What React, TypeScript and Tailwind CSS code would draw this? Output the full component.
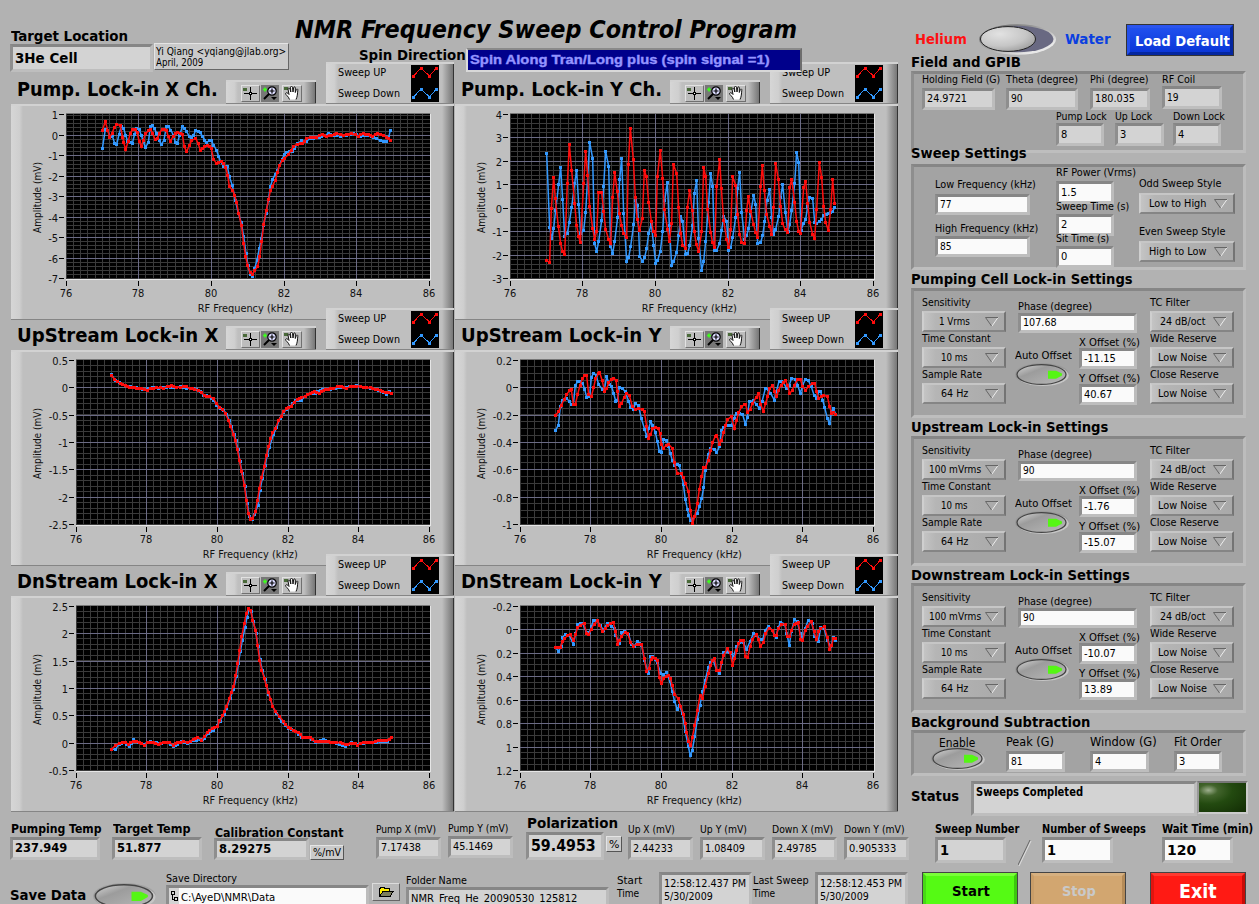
import React, { useLayoutEffect, useRef } from "react";
import clsx from "clsx";

const UI = "font-['DejaVu_Sans_Condensed','Noto_Sans',sans-serif]";

// Text set to a fixed advance width, glyphs are stretched to fill it.
function Txt({ w, className, children }: { w?: number; className?: string; children: string }) {
  const outer = useRef<HTMLSpanElement>(null);
  const inner = useRef<HTMLSpanElement>(null);

  useLayoutEffect(() => {
    if (!outer.current || !inner.current || !w) return;
    const natural = inner.current.offsetWidth;
    outer.current.style.width = `${w}px`;
    inner.current.style.transform = `scaleX(${w / natural})`;
  }, [w, children]);

  return (
    <span ref={outer} className={clsx("block shrink-0 whitespace-nowrap", className)}>
      <span ref={inner} className="inline-block origin-left align-top">
        {children}
      </span>
    </span>
  );
}

const INSET =
  "border-3 border-t-[#868686] border-l-[#8e8e8e] border-r-[#bcbcbc] border-b-[#bebebe]";

function Box({
  value,
  vw,
  white,
  className,
  text = "text-[11px] pt-[1px]",
}: {
  value: string;
  vw?: number;
  white?: boolean;
  className: string;
  text?: string;
}) {
  return (
    <div
      className={clsx(
        "flex shrink-0 items-center pl-[2px]",
        INSET,
        white ? "bg-[#fafafa]" : "bg-[#d3d3d3]",
        className
      )}
    >
      <Txt w={vw} className={text}>
        {value}
      </Txt>
    </div>
  );
}

interface FieldProps {
  label: string;
  lw: number;
  value: string;
  vw?: number;
  white?: boolean;
  className?: string;
  labelClass?: string;
  box: string;
  text?: string;
}

function Field({ label, lw, value, vw, white, className, labelClass, box, text }: FieldProps) {
  return (
    <div className={clsx("flex shrink-0 flex-col", className)}>
      <Txt w={lw} className={clsx("relative", labelClass ?? "h-[14px] text-[11px] leading-[14px]")}>
        {label}
      </Txt>
      <Box value={value} vw={vw} white={white} className={box} text={text} />
    </div>
  );
}

function Dropdown({ value, vw, wide }: { value: string; vw: number; wide?: boolean }) {
  return (
    <div
      className={clsx(
        "flex h-[21px] items-center border-2 border-t-[#c6c6c6] border-r-[#747474] border-b-[#858585] border-l-[#cfcfcf] bg-linear-to-r from-[#c4c4c4] via-[#b5b5b5] via-15% to-[#a9a9a9]",
        wide ? "mt-[1px] w-[96px]" : "w-[84px]"
      )}
    >
      <div className="flex flex-1 justify-center">
        <Txt w={vw} className="text-[11px] leading-[16px]">
          {value}
        </Txt>
      </div>
      <svg width="14" height="10" viewBox="0 0 14 10" className="mt-[1px] mr-[5px] shrink-0">
        <path d="M13 0.5 L7 9" stroke="#ececec" fill="none" />
        <path d="M13 0.5 H0.5 L6.5 9" stroke="#666" fill="none" />
      </svg>
    </div>
  );
}

function Setting({ label, lw, value, vw, wide }: { label: string; lw: number; value: string; vw: number; wide?: boolean }) {
  return (
    <div className="h-[36px]">
      <Txt w={lw} className="h-[15px] text-[11px] leading-[13px]">
        {label}
      </Txt>
      <Dropdown value={value} vw={vw} wide={wide} />
    </div>
  );
}

function GreenSwitch({ id, width, height }: { id: string; width: number; height: number }) {
  return (
    <svg width={width} height={height} viewBox="0 0 54 24" preserveAspectRatio="none" className="shrink-0">
      <defs>
        <linearGradient id={id} x1="0" y1="0" x2="1" y2="1">
          <stop offset="0" stopColor="#d8d8d8" />
          <stop offset="0.35" stopColor="#9c9c9c" />
          <stop offset="1" stopColor="#b9b9b9" />
        </linearGradient>
      </defs>
      <ellipse cx="27" cy="12" rx="27" ry="12" fill="#8f8f8f" opacity="0.5" />
      <ellipse cx="27.8" cy="13" rx="26" ry="11" fill="#c6c6c6" />
      <ellipse cx="26.5" cy="12" rx="24.5" ry="10.4" fill={`url(#${id})`} stroke="#444" strokeWidth="1.3" />
      <path d="M33 8 L41 8 L47 11 L47 13 L41 16.5 L33 16.5 Z" fill="#55f614" />
    </svg>
  );
}

function Bevel({ className, children }: { className: string; children: React.ReactNode }) {
  return (
    <div
      className={clsx(
        "relative flex border-t-2 border-b border-t-[#d2d2d2] border-b-[#858585] bg-[#bfbfbf]",
        className
      )}
    >
      <div className="w-3 shrink-0 bg-linear-to-r from-[#d6d6d6] via-[#cfcfcf] via-70% to-[#bfbfbf]" />
      <div className="flex min-w-0 flex-1">{children}</div>
      <div className="w-3 shrink-0 border-r border-[#333] bg-linear-to-r from-[#bfbfbf] to-[#777]" />
    </div>
  );
}

function Crosshair() {
  return (
    <svg width="19" height="16" viewBox="0 0 19 16" shapeRendering="crispEdges" className="shrink-0">
      <rect x="2" y="3" width="4" height="3" fill="#4a6a3a" />
      <path d="M3 8.5H8M11 8.5H16M9.5 2V7M9.5 10V15" stroke="#000" />
      <rect x="8.5" y="7.5" width="2" height="2" fill="#fff" stroke="#000" />
    </svg>
  );
}

function Magnifier() {
  return (
    <svg width="18" height="16" viewBox="0 0 18 16">
      <path d="M2 4.5H6M4 2.5V6.5" stroke="#3dff1c" strokeWidth="1.6" />
      <circle cx="11" cy="6" r="4.2" fill="#dcdcff" stroke="#000" strokeWidth="1.2" />
      <path d="M8.5 6H13.5M11 3.5V8.5" stroke="#000" strokeWidth="1.2" />
      <path d="M8 9L3 14" stroke="#000" strokeWidth="2" />
      <path d="M10 12H16L13 15Z" fill="#000" />
    </svg>
  );
}

function Hand() {
  return (
    <svg width="19" height="16" viewBox="0 0 19 16" className="shrink-0">
      <rect x="1" y="2" width="4" height="3" fill="#4a6a3a" />
      <path
        d="M6.5 14.5 C5.5 11 2.5 10 2.5 8.5 C3.2 7 5 8 6 9.5 L5 4 C5 2.8 6.5 2.8 7 4 L7.8 7 L7.5 2.2 C7.7 1 9.3 1 9.5 2.2 L10 7 L10.7 2.5 C11 1.4 12.4 1.7 12.3 3 L12.3 7.5 L13.3 4.5 C13.8 3.5 15 4 14.8 5.2 C14.4 9 14.5 11.5 13 14.5"
        fill="#fff"
        stroke="#111"
        strokeWidth="1"
      />
    </svg>
  );
}

const TOOL = "h-[17px] border border-t-[#e2e2e2] border-l-[#e2e2e2] border-r-[#707070] border-b-[#707070] bg-[#bdbdbd] flex items-center justify-center overflow-hidden";

function Palette() {
  return (
    <Bevel className="mt-[18px] h-[24px] w-[90px]">
      <div className="flex w-full items-center pt-[1px]">
        <div className={clsx(TOOL, "ml-[3px] w-[19px]")}><Crosshair /></div>
        <div className="ml-[1px] flex h-[17px] w-[18px] items-center justify-center overflow-hidden bg-[#777]"><Magnifier /></div>
        <div className={clsx(TOOL, "ml-[3px] w-[20px]")}><Hand /></div>
      </div>
    </Bevel>
  );
}

function LegendLine({ y, color }: { y: number; color: string }) {
  const pts = [[2.5, y + 8], [10, y], [18.5, y + 8], [25.5, y]];
  return (
    <g fill={color} shapeRendering="crispEdges">
      <polyline points={pts.map((p) => p.join(",")).join(" ")} fill="none" stroke={color} />
      {pts.map(([x, py]) => (
        <rect key={x} x={x - 1.5} y={py - 1.5} width="3" height="3" />
      ))}
    </g>
  );
}

function Legend() {
  return (
    <Bevel className="h-[42px] w-[128px]">
      <div className="flex flex-col pt-[1px]">
        <Txt w={48} className="h-[21px] text-[11px] leading-[15px]">Sweep UP</Txt>
        <Txt w={62} className="text-[11px] leading-[15px]">Sweep Down</Txt>
      </div>
      <svg width="28" height="37" viewBox="0 0 28 37" className="mt-[1px] mr-[3px] ml-auto shrink-0 bg-black">
        <LegendLine y={3} color="#ff0d0d" />
        <LegendLine y={24} color="#3399ff" />
      </svg>
    </Bevel>
  );
}

interface ChartProps {
  title: string;
  left: number;
  yTicks: string[];
  yAt: number[];
  minor: number;
  origin: [number, number];
  up: string;
  down: string;
}

// Traces are stored at three units per pixel.
function Trace({ data, color, origin }: { data: string; color: string; origin: [number, number] }) {
  const raw = data.trim().split(/\s+/).map((p) => {
    const [x, y] = p.split(",").map(Number);
    return [(x - origin[0]) / 3, (y - origin[1]) / 3];
  });
  const marks: number[][] = [];
  raw.forEach(([x, y], i) => {
    marks.push([x, y]);
    const next = raw[i + 1];
    if (!next) return;
    const n = Math.round((next[0] - x) / 2.7);
    for (let k = 1; k < n; k++) {
      marks.push([x + ((next[0] - x) * k) / n, y + ((next[1] - y) * k) / n]);
    }
  });
  return (
    <g fill={color}>
      <polyline points={raw.map((p) => p.join(",")).join(" ")} fill="none" stroke={color} strokeWidth="1.5" />
      {marks.map(([x, y], i) => (
        <rect key={i} x={Math.round(x - 1.5)} y={Math.round(y - 1.5)} width="3" height="3" shapeRendering="crispEdges" />
      ))}
    </g>
  );
}

function Plot({ left, yTicks, yAt, minor, origin, up, down }: ChartProps) {
  const right = 419.5;
  const top = 10;
  const bottom = 175;
  const stepX = (right - left) / 5;
  const majorX = [0, 1, 2, 3, 4, 5].map((i) => Math.floor(left + i * stepX) + 0.5);
  const minorX = Array.from({ length: 50 }, (_, i) => Math.floor(left + (i * stepX) / 10) + 0.5);
  const unit = (yAt[yAt.length - 1] - yAt[1]) / (yAt.length - 2) / minor;
  const minorY: number[] = [];
  for (let y = yAt[1]; y > top; y -= unit) minorY.push(Math.round(y) + 0.5);
  for (let y = yAt[1]; y < bottom; y += unit) minorY.push(Math.round(y) + 0.5);

  return (
    <svg width="443" height="213" viewBox="1 2 443 213" className="absolute top-0 left-0">
      <g shapeRendering="crispEdges">
        <rect x={left} y={top} width={420 - left} height={bottom - top} fill="#000" />
        <path d={minorX.map((x) => `M${x} ${top}V${bottom}`).join("") + minorY.map((y) => `M${left} ${y}H420`).join("")} stroke="#3a3a3a" />
        <path
          d={majorX.slice(1, 5).map((x) => `M${x} ${top}V${bottom}`).join("") + yAt.slice(1, -1).map((y) => `M${left} ${y + 0.5}H420`).join("")}
          stroke="#6b6b85"
        />
        <path d={`M${left} 9.5H420`} stroke="#777" />
        <path d={`M${left} ${bottom + 0.5}H420.5V10`} stroke="#e6e6e6" fill="none" />
        <path d={majorX.map((x) => `M${x} 177V182`).join("") + yAt.map((y) => `M${left - 7} ${y + 0.5}H${left - 2}`).join("")} stroke="#000" />
      </g>
      <Trace data={down} color="#3399ff" origin={origin} />
      <Trace data={up} color="#ff0d0d" origin={origin} />
      <g fontSize="11" fill="#111">
        {yTicks.map((t, i) => (
          <text key={t} x={left - 8} y={yAt[i] + 5} textAnchor="end">{t}</text>
        ))}
        {majorX.map((x, i) => (
          <text key={x} x={x - 0.5} y="193" textAnchor="middle">{76 + i * 2}</text>
        ))}
        <text x={(left + right) / 2 - 50} y="208" textLength="95" lengthAdjust="spacingAndGlyphs">RF Frequency (kHz)</text>
        <text transform="translate(31 129) rotate(-90)" textLength="71" lengthAdjust="spacingAndGlyphs">Amplitude (mV)</text>
      </g>
    </svg>
  );
}

function Chart(props: ChartProps) {
  return (
    <div className="h-[246px] w-[444px]">
      <div className="flex h-[42px]">
        <div className="w-[216px] pt-[15px] pl-[7px]">
          <Txt w={201} className="text-[19.5px] leading-[26px] font-bold">{props.title}</Txt>
        </div>
        <Palette />
        <div className="ml-auto"><Legend /></div>
      </div>
      <Bevel className="ml-[1px] h-[216px] w-[443px]">
        <Plot {...props} />
      </Bevel>
    </div>
  );
}

const CHARTS: ChartProps[] = [
  {
    title: "Pump. Lock-in X Ch.",
    left: 56,
    yTicks: ["1", "0", "-1", "-2", "-3", "-4", "-5", "-6", "-7"],
    yAt: [10, 31, 51, 72, 92, 113, 133, 154, 174],
    minor: 5,
    origin: [30, 312],
    down: "307,446 316,388 323,390 330,410 336,405 344,430 350,434 357,403 364,378 371,385 377,406 383,424 390,427 397,430 404,402 410,385 417,387 424,406 430,425 436,442 445,428 451,380 457,377 463,385 470,400 478,422 484,434 492,420 499,380 505,380 512,390 520,405 526,427 532,430 539,405 547,380 553,384 560,395 568,410 575,412 581,405 587,391 594,393 600,398 607,408 614,420 620,428 627,422 634,422 641,435 649,450 656,469 662,485 670,498 682,498 688,530 697,556 706,600 715,640 724,668 731,710 738,760 744,797 750,822 757,829 764,806 771,780 778,745 784,714 791,675 798,640 805,600 811,560 818,538 825,524 832,512 838,495 846,478 853,464 860,457 868,455 876,453 884,444 893,430 905,422 920,424 930,415 950,413 965,410 985,401 1000,406 1020,408 1040,405 1060,400 1080,408 1100,405 1115,410 1128,414 1140,422 1150,425 1160,425 1166,412 1171,391",
    up: "307,391 316,365 323,390 329,412 336,400 343,382 350,373 361,377 368,412 371,427 377,449 384,425 391,400 398,388 405,388 411,398 418,425 424,440 430,420 437,400 446,392 452,388 458,400 465,418 472,414 478,400 486,388 499,390 505,410 511,424 519,410 526,400 533,397 547,402 553,440 560,455 568,436 575,422 587,414 594,430 601,450 608,445 621,436 628,440 634,446 641,478 649,490 656,486 663,484 670,490 677,503 683,525 688,559 697,570 704,585 710,607 716,640 724,675 731,730 737,770 743,797 750,817 757,824 764,812 773,799 779,769 785,725 791,672 799,630 806,598 811,572 817,560 826,540 832,517 838,497 847,482 854,474 865,464 874,450 881,438 893,432 907,430 920,416 930,412 950,412 967,402 980,409 995,406 1010,400 1030,406 1055,400 1075,408 1090,401 1105,404 1118,408 1133,400 1150,407 1160,411 1166,415 1171,421",
  },
  {
    title: "Pump. Lock-in Y Ch.",
    left: 56,
    yTicks: ["4", "3", "2", "1", "0", "-1", "-2", "-3"],
    yAt: [10, 33, 57, 80, 104, 127, 151, 174],
    minor: 5,
    origin: [12, 312],
    down: "290,460 299,683 305,716 311,685 317,630 326,553 332,502 338,598 344,709 352,700 358,667 365,622 374,549 380,511 386,613 392,700 401,691 407,637 419,427 428,475 434,731 440,754 446,724 455,661 461,559 467,454 476,499 482,740 488,760 494,724 503,652 509,538 515,475 521,640 530,784 536,772 542,739 551,673 556,600 563,616 569,769 578,784 584,772 590,745 596,700 604,672 611,736 617,790 623,781 631,754 638,694 644,601 652,547 658,676 665,796 671,784 680,757 686,706 692,649 698,664 707,763 713,761 719,736 728,676 733,580 740,541 746,715 755,811 761,784 767,724 776,607 782,520 788,559 794,751 800,751 809,730 815,691 821,650 830,664 836,751 842,742 848,712 857,652 863,565 869,517 875,637 884,718 890,706 896,685 902,640 911,586 917,613 923,730 932,727 938,706 944,664 951,601 959,568 965,652 971,703 977,688 986,649 992,592 998,553 1006,637 1014,694 1019,674 1025,631 1034,550 1040,457 1046,487 1053,690 1061,670 1067,658 1073,620 1079,592 1088,596 1094,667 1100,670 1109,664 1115,658 1121,646 1128,643 1136,640 1142,638 1148,634 1154,622",
    up: "290,782 299,787 304,625 311,532 316,596 325,680 332,731 338,754 344,763 352,550 358,433 365,511 374,611 380,677 386,710 391,728 401,550 407,454 413,527 419,620 428,685 434,718 440,694 446,577 455,577 461,634 467,688 476,719 482,731 488,592 494,517 502,575 508,640 515,676 521,700 530,712 535,493 541,385 550,479 556,592 562,659 568,691 577,656 583,511 589,529 596,607 604,664 610,694 617,706 622,530 631,451 638,535 643,629 653,688 658,724 665,671 670,493 680,520 686,622 692,700 698,737 707,745 712,622 719,571 727,632 733,694 739,733 746,754 755,695 761,502 767,530 773,628 782,697 788,728 794,743 800,560 809,478 814,565 821,661 830,718 836,743 842,688 848,530 857,556 863,643 869,703 875,728 884,731 890,632 895,589 902,634 911,674 917,697 923,712 932,559 937,496 943,571 950,643 959,679 965,703 971,622 977,490 985,538 992,619 998,671 1005,688 1013,697 1019,562 1025,538 1034,607 1040,664 1046,694 1051,700 1061,562 1067,544 1073,610 1079,667 1088,703 1094,715 1100,628 1108,487 1115,532 1121,619 1127,667 1135,691 1142,628 1148,538 1154,610",
  },
  {
    title: "UpStream Lock-in X",
    left: 66,
    yTicks: ["0.5", "0", "-0.5", "-1", "-1.5", "-2", "-2.5"],
    yAt: [10, 37, 65, 92, 119, 147, 174],
    minor: 5,
    origin: [30, 120],
    down: "334,193 345,210 358,218 375,227 390,230 410,233 436,239 456,231 475,234 500,232 520,232 540,230 560,235 580,235 600,243 610,255 628,258 641,270 650,286 660,294 670,300 680,312 687,330 694,350 702,372 708,392 714,418 720,455 727,490 735,530 742,580 748,618 757,628 764,612 774,585 780,540 787,505 795,465 802,435 808,412 820,374 830,352 840,325 850,308 860,298 872,288 885,272 905,270 915,258 930,250 945,250 960,240 990,238 1005,234 1020,231 1040,232 1068,226 1090,232 1110,234 1125,239 1145,245 1158,252 1168,244 1175,249",
    up: "334,196 343,207 352,215 362,220 375,225 388,233 410,234 425,235 441,241 452,235 470,233 490,234 502,230 515,227 528,232 540,231 558,230 570,236 583,237 595,240 604,247 613,257 628,260 640,265 650,280 658,291 667,297 676,310 685,330 692,350 700,372 706,392 712,418 718,450 725,485 733,525 739,571 745,610 752,629 758,624 766,605 772,572 778,536 785,502 793,468 799,437 806,409 812,385 818,368 827,354 836,330 844,318 850,305 860,296 873,288 882,277 892,268 905,261 917,259 930,250 943,244 957,250 970,240 985,237 1000,236 1012,230 1025,229 1038,235 1050,230 1070,228 1090,232 1110,233 1125,238 1140,241 1155,247 1175,250",
  },
  {
    title: "UpStream Lock-in Y",
    left: 66,
    yTicks: ["0.2", "0", "-0.2", "-0.4", "-0.6", "-0.8", "-1"],
    yAt: [10, 37, 65, 92, 119, 147, 174],
    minor: 4,
    origin: [12, 120],
    down: "316,361 325,346 331,290 338,270 349,265 358,274 364,283 370,283 376,226 383,215 392,213 398,220 404,238 410,262 419,258 424,202 430,190 438,195 446,223 456,237 463,240 470,200 478,224 484,228 491,250 497,273 502,270 508,232 518,236 526,245 536,274 542,292 550,298 556,281 565,287 574,325 584,358 590,380 596,355 602,335 608,345 616,367 622,394 628,424 634,427 641,388 649,392 656,408 661,430 667,451 674,465 682,463 688,467 694,492 700,522 706,569 712,597 716,616 722,631 727,628 734,618 742,609 748,590 755,565 761,532 766,480 775,434 781,415 793,418 800,427 809,409 814,362 821,352 830,346 844,346 852,325 858,310 868,310 878,314 886,342 892,322 898,275 910,272 918,282 928,295 936,275 946,236 954,238 962,250 973,270 979,245 987,214 1000,217 1010,236 1018,225 1025,204 1036,208 1043,225 1051,250 1058,225 1066,209 1075,212 1084,230 1092,255 1100,265 1106,245 1112,245 1118,270 1124,292 1132,325 1139,341 1144,305 1150,296 1157,312",
    up: "316,316 326,305 333,287 343,267 350,254 358,242 364,238 370,283 376,283 383,253 390,225 398,205 404,196 410,197 416,254 424,259 431,233 437,205 446,190 449,187 456,210 464,244 470,236 476,218 483,208 491,205 498,210 502,245 508,289 515,280 522,262 530,250 538,256 547,289 556,298 565,296 577,298 583,305 590,350 596,385 602,372 608,356 617,352 625,355 630,370 634,402 641,415 648,405 655,402 667,415 673,458 682,490 694,491 700,503 706,520 715,543 721,600 728,640 734,620 742,580 748,538 755,499 761,472 767,472 775,450 782,422 788,397 796,378 800,376 809,402 815,390 821,368 827,345 833,328 844,320 853,355 860,330 866,308 875,290 882,284 887,284 893,308 900,298 908,280 918,262 926,250 932,282 940,304 947,280 953,258 958,236 968,226 974,245 980,260 986,240 993,225 1006,212 1013,225 1019,250 1026,242 1033,225 1043,209 1051,208 1058,230 1067,241 1075,230 1087,220 1094,220 1100,245 1106,265 1114,260 1121,256 1132,260 1139,290 1145,311 1150,306 1157,313",
  },
  {
    title: "DnStream Lock-in X",
    left: 66,
    yTicks: ["2.5", "2", "1.5", "1", "0.5", "0", "-0.5"],
    yAt: [10, 37, 65, 92, 119, 147, 174],
    minor: 5,
    origin: [30, 138],
    down: "334,598 346,598 358,582 372,577 387,590 401,569 415,577 432,582 450,574 470,578 485,580 500,577 520,589 533,583 545,574 562,580 580,572 600,569 613,565 625,550 640,540 652,527 660,513 672,492 680,475 690,445 701,418 709,378 715,340 721,305 727,270 735,233 741,202 747,180 753,184 760,215 768,250 774,290 780,328 787,362 795,388 806,432 818,470 830,490 845,515 865,535 885,543 905,562 925,563 945,576 970,568 985,575 1010,580 1036,588 1055,578 1072,584 1100,577 1120,578 1140,575 1162,575 1175,563",
    up: "334,598 346,587 358,580 375,577 385,582 400,575 418,576 433,586 442,578 460,577 475,582 490,577 508,577 520,585 533,578 550,574 562,578 580,568 593,562 605,570 613,560 622,547 636,536 652,530 659,511 668,497 674,484 680,468 688,446 694,426 701,408 707,377 713,340 719,302 725,260 733,220 739,189 746,176 752,182 758,210 767,242 773,287 779,331 785,360 793,385 799,407 806,428 812,449 818,469 827,485 838,499 850,514 865,533 880,540 895,547 908,561 930,562 945,573 970,573 1000,577 1020,578 1035,584 1050,580 1065,580 1072,585 1090,577 1118,578 1135,571 1160,572 1175,562",
  },
  {
    title: "DnStream Lock-in Y",
    left: 66,
    yTicks: ["-0.2", "0", "0.2", "0.4", "0.6", "0.8", "1", "1.2"],
    yAt: [10, 33, 57, 80, 104, 127, 151, 174],
    minor: 4,
    origin: [12, 138],
    down: "316,293 326,303 333,290 338,262 346,253 358,256 370,283 377,250 383,222 398,220 409,246 418,246 424,230 430,212 440,210 450,225 460,240 472,220 484,228 492,235 497,255 508,280 515,248 524,244 535,252 545,282 553,288 562,275 575,285 583,330 595,370 602,320 608,320 622,338 632,370 640,373 650,368 660,395 667,425 674,455 682,478 688,465 697,490 706,545 715,590 721,617 727,600 734,560 742,508 750,465 758,425 766,390 775,352 782,338 790,332 800,360 809,370 815,340 821,308 832,303 845,310 850,322 860,290 868,278 880,278 890,297 900,275 910,251 920,255 930,268 938,268 946,240 955,229 966,240 978,262 985,232 992,217 1004,222 1010,250 1018,286 1024,245 1033,209 1042,215 1050,250 1058,265 1066,235 1074,212 1086,220 1094,260 1105,273 1112,233 1122,235 1132,270 1142,290 1150,263 1157,272",
    up: "316,293 330,292 338,275 344,266 352,256 360,254 370,270 377,252 383,232 391,225 402,220 410,250 416,254 424,237 432,222 442,212 449,226 458,244 466,236 473,225 490,217 497,245 503,282 509,270 515,258 525,247 533,250 542,278 551,289 561,282 575,283 583,325 590,365 597,355 603,328 608,321 622,331 628,382 634,401 641,386 648,378 656,376 661,385 667,406 674,432 684,446 692,470 700,492 706,520 710,548 716,573 722,587 727,562 734,526 742,482 750,437 758,445 765,410 775,370 782,345 788,330 794,326 800,360 809,362 815,338 821,315 832,296 840,308 848,346 854,325 860,300 866,280 872,272 880,272 886,320 893,322 900,290 908,268 918,252 925,268 931,288 940,278 947,250 957,234 966,240 973,255 979,255 985,235 995,222 1006,224 1012,260 1018,260 1024,242 1032,222 1045,217 1052,268 1058,272 1066,240 1073,228 1084,214 1092,245 1100,268 1106,245 1112,235 1123,230 1132,262 1139,298 1145,285 1150,266 1157,266",
  },
];

function Header() {
  return (
    <header className="relative z-10 flex h-[62px] pl-[10px]">
      <div className="w-[143px] pt-[28px]">
        <Txt w={117} className="ml-[1px] h-[16px] text-[14px] leading-[17px] font-bold">Target Location</Txt>
        <Box value="3He Cell" vw={63} className="h-[28px] w-[143px]" text="text-[14px] font-bold leading-[18px]" />
      </div>
      <div className="mt-[43px] ml-[1px] h-[27px] w-[135px] shrink-0 border border-t-[#e4e4e4] border-l-[#e4e4e4] border-r-[#666] border-b-[#666] bg-[#cacaca] pl-[1px]">
        <Txt w={130} className="h-[13px] text-[10px] leading-[15px]">{"Yi Qiang <yqiang@jlab.org>"}</Txt>
        <Txt w={47} className="text-[10px] leading-[12px]">April, 2009</Txt>
      </div>
      <div className="ml-[6px] pt-[14px]">
        <Txt w={502} className="h-[33px] text-[25.5px] leading-[31px] font-bold italic">NMR Frequency Sweep Control Program</Txt>
        <div className="flex pl-[64px]">
          <Txt w={107} className="h-[16px] text-[14px] leading-[16px] font-bold">Spin Direction</Txt>
          <div className="mt-[1px] flex h-[24px] w-[336px] items-center border-2 border-t-[#8a8a8a] border-l-[#dcdcdc] border-r-[#6d6d6d] border-b-[#d8d8d8] bg-[#00008b] pl-[2px] font-['Liberation_Sans',sans-serif]">
            <Txt w={300} className="text-[13.5px] font-bold text-[#9494ff] [-webkit-text-stroke:0.4px_#9494ff]">
              Spin Along Tran/Long plus (spin signal =1)
            </Txt>
          </div>
        </div>
      </div>
    </header>
  );
}

function Unit({ children, w, className }: { children: string; w: number; className: string }) {
  return (
    <div className={clsx("flex shrink-0 items-center justify-center border border-t-[#e4e4e4] border-l-[#e4e4e4] border-r-[#555] border-b-[#555] bg-[#cacaca]", className)}>
      <Txt w={w} className="text-[11px] leading-[13px]">{children}</Txt>
    </div>
  );
}

const BOLD_LABEL = "h-[15px] ml-[1px] text-[12px] leading-[14px] font-bold";

function Readouts() {
  return (
    <>
      <div className="flex h-[57px] pl-[10px]">
        <Field label="Pumping Temp" lw={91} value="237.949" vw={52} className="mt-[10px] w-[102px]" labelClass={BOLD_LABEL} box="h-[23px] w-[90px]" text="text-[12.5px] font-bold" />
        <Field label="Target Temp" lw={77} value="51.877" vw={44} className="mt-[10px] w-[102px]" labelClass={BOLD_LABEL} box="h-[23px] w-[90px]" text="text-[12.5px] font-bold" />
        <Field label="Calibration Constant" lw={128} value="8.29275" vw={52} className="mt-[14px] w-[96px]" labelClass="h-[12px] ml-[1px] text-[12px] leading-[14px] font-bold" box="h-[22px] w-[95px]" text="text-[12.5px] font-bold" />
        <Unit w={28} className="mt-[33px] h-[15px] w-[34px]">%/mV</Unit>
        <Field label="Pump X (mV)" lw={60} value="7.17438" vw={40} className="mt-[11px] ml-[32px] w-[72px]" box="h-[22px] w-[65px]" />
        <Field label="Pump Y (mV)" lw={60} value="45.1469" vw={40} className="mt-[10px] w-[78px]" box="h-[22px] w-[65px]" />
        <Field label="Polarization" lw={91} value="59.4953" vw={65} className="mt-[3px] w-[80px]" labelClass="h-[17px] ml-[1px] text-[14px] leading-[17px] font-bold" box="h-[28px] w-[78px]" text="text-[16.5px] font-bold" />
        <Unit w={10} className="mt-[24px] h-[16px] w-[16px]">%</Unit>
        <Field label="Up X (mV)" lw={47} value="2.44233" vw={40} className="mt-[11px] ml-[6px] w-[72px]" box="h-[23px] w-[65px]" />
        <Field label="Up Y (mV)" lw={47} value="1.08409" vw={40} className="mt-[11px] w-[72px]" box="h-[23px] w-[65px]" />
        <Field label="Down X (mV)" lw={61} value="2.49785" vw={40} className="mt-[11px] w-[72px]" box="h-[23px] w-[65px]" />
        <Field label="Down Y (mV)" lw={61} value="0.905333" vw={47} className="mt-[11px] w-[66px]" box="h-[23px] w-[65px]" />
      </div>
      <div className="flex h-[40px] pl-[10px]">
        <Txt w={76} className="mt-[18px] text-[14px] leading-[17px] font-bold">Save Data</Txt>
        <div className="mt-[14px] ml-[7px] h-[26px] w-[63px]">
          <GreenSwitch id="sw-save" width={63} height={26} />
        </div>
        <div className="mt-[4px] ml-[10px] w-[206px]">
          <Txt w={71} className="h-[12px] text-[11px] leading-[12px]">Save Directory</Txt>
          <div className={clsx("flex h-[25px] w-[203px] bg-[#fafafa]", INSET)}>
            <div className="flex w-[10px] justify-center bg-[#d3d3d3] pt-[2px]">
              <svg width="8" height="12" viewBox="0 0 8 12" shapeRendering="crispEdges">
                <path d="M1.5 1.5h3v3h-3zM4.5 7.5h3v3h-3zM2.5 4.5v4.5h2" fill="none" stroke="#000" />
              </svg>
            </div>
            <Txt w={94} className="ml-[2px] text-[11px] leading-[19px]">{"C:\\AyeD\\NMR\\Data"}</Txt>
          </div>
        </div>
        <div className="mt-[14px] flex h-[18px] w-[28px] items-center justify-center border border-t-[#dcdcdc] border-l-[#dcdcdc] border-r-[#666] border-b-[#666] bg-[#b9b9b9]">
          <svg width="16" height="12" viewBox="0 0 16 12" shapeRendering="crispEdges">
            <path d="M1.5 10.5V2.5h1V1.5h4v1h5v3" fill="#ffee00" stroke="#000" />
            <path d="M1.5 10.5L5 5.5h10l-3 5z" fill="#7d7d5c" stroke="#000" />
          </svg>
        </div>
        <Field label="Folder Name" lw={61} value="NMR_Freq_He_20090530_125812" vw={166} className="mt-[5px] ml-[6px] w-[211px]" box="h-[24px] w-[203px]" labelClass="h-[13px] text-[11px] leading-[13px]" text="text-[11px]" />
        <div className="mt-[5px] w-[42px] text-[11px] leading-[13px]">
          <Txt w={25}>Start</Txt>
          <Txt w={22}>Time</Txt>
        </div>
        <div className={clsx("mt-[3px] h-[36px] w-[93px] bg-[#d3d3d3] pt-[2px] pl-[2px] text-[11px] leading-[13px]", INSET)}>
          <Txt w={82}>12:58:12.437 PM</Txt>
          <Txt w={49}>5/30/2009</Txt>
        </div>
        <div className="mt-[5px] ml-[1px] w-[62px] text-[11px] leading-[13px]">
          <Txt w={56}>Last Sweep</Txt>
          <Txt w={22}>Time</Txt>
        </div>
        <div className={clsx("mt-[3px] h-[36px] w-[93px] bg-[#d3d3d3] pt-[2px] pl-[2px] text-[11px] leading-[13px]", INSET)}>
          <Txt w={82}>12:58:12.453 PM</Txt>
          <Txt w={49}>5/30/2009</Txt>
        </div>
      </div>
    </>
  );
}

function Heading({ w, className, children }: { w: number; className?: string; children: string }) {
  return (
    <Txt w={w} className={clsx("relative text-[14px] leading-[18px] font-bold", className ?? "h-[18px]")}>
      {children}
    </Txt>
  );
}

interface LockInProps {
  id: string;
  sensitivity: [string, number];
  phase: [string, number];
  x: [string, number];
  y: [string, number];
}

function LockIn({ id, sensitivity, phase, x, y }: LockInProps) {
  return (
    <div className={clsx("flex h-[130px] w-[335px] bg-[#a3a3a3] pt-[5px] pl-[8px]", INSET)}>
      <div className="w-[93px]">
        <Setting label="Sensitivity" lw={49} value={sensitivity[0]} vw={sensitivity[1]} />
        <Setting label="Time Constant" lw={69} value="10 ms" vw={27} />
        <Setting label="Sample Rate" lw={60} value="64 Hz" vw={27} />
      </div>
      <div className="w-[135px] pt-[4px]">
        <Field label="Phase (degree)" lw={74} value={phase[0]} vw={phase[1]} white className="ml-[3px]" labelClass="h-[13px] text-[11px] leading-[13px]" box="h-[20px] w-[119px]" />
        <div className="mt-[4px] flex">
          <div className="w-[64px] pt-[12px]">
            <Txt w={57} className="h-[14px] text-[11px] leading-[13px]">Auto Offset</Txt>
            <GreenSwitch id={id} width={54} height={23} />
          </div>
          <div className="w-[60px]">
            <Field label="X Offset (%)" lw={61} value={x[0]} vw={x[1]} white className="h-[36px]" labelClass="h-[11px] text-[11px] leading-[12px]" box="h-[21px] w-[58px]" />
            <Field label="Y Offset (%)" lw={61} value={y[0]} vw={y[1]} white labelClass="h-[11px] text-[11px] leading-[12px]" box="h-[21px] w-[58px]" />
          </div>
        </div>
      </div>
      <div>
        <Setting label="TC Filter" lw={40} value="24 dB/oct" vw={46} />
        <Setting label="Wide Reserve" lw={67} value="Low Noise" vw={49} />
        <Setting label="Close Reserve" lw={69} value="Low Noise" vw={49} />
      </div>
    </div>
  );
}

function BigButton({ label, w, className, text }: { label: string; w: number; className: string; text: string }) {
  return (
    <button className={clsx("flex h-[38px] w-[96px] shrink-0 items-center justify-center border-4 outline-1 -outline-offset-1 outline-[#444]", className)}>
      <Txt w={w} className={clsx("font-bold", text)}>{label}</Txt>
    </button>
  );
}

const TIGHT_14 = "h-[14px] text-[11px] leading-[11px]";
const TIGHT_12 = "h-[12px] text-[11px] leading-[11px]";
const RUN_LABEL = "h-[15px] text-[11.5px] leading-[15px] font-bold";

function Controls() {
  return (
    <aside className="w-[348px]">
      <div className="flex h-[53px] items-start pt-[24px] pl-[4px]">
        <Txt w={52} className="mt-[6px] text-[14px] leading-[18px] font-bold text-[#ff1010]">Helium</Txt>
        <svg width="80" height="33" viewBox="0 0 80 33" className="ml-[11px] shrink-0">
          <defs>
            <linearGradient id="rim" x1="0" y1="0" x2="1" y2="1">
              <stop offset="0.2" stopColor="#777" />
              <stop offset="0.8" stopColor="#e8e8e8" />
            </linearGradient>
            <radialGradient id="knob" cx="0.35" cy="0.3" r="0.8">
              <stop offset="0" stopColor="#e2e2e2" />
              <stop offset="0.6" stopColor="#c6c6c6" />
              <stop offset="1" stopColor="#9a9a9a" />
            </radialGradient>
          </defs>
          <ellipse cx="39.5" cy="15.5" rx="38.5" ry="15.3" fill="url(#rim)" />
          <ellipse cx="39" cy="15" rx="36.5" ry="13.3" fill="#696982" />
          <ellipse cx="30" cy="15" rx="27.5" ry="12.4" fill="url(#knob)" stroke="#222" />
        </svg>
        <Txt w={46} className="mt-[6px] ml-[7px] text-[14px] leading-[18px] font-bold text-[#0a3fe0]">Water</Txt>
        <button className="ml-[15px] flex h-[32px] w-[108px] shrink-0 items-center justify-center border-4 border-t-[#2b55ef] border-r-[#0426a0] border-b-[#0426a0] border-l-[#2450ea] bg-linear-to-b from-[#2050ee] to-[#0a36d8] pt-[2px] outline-1 -outline-offset-1 outline-[#333]">
          <Txt w={95} className="text-[14px] font-bold text-white">Load Default</Txt>
        </button>
      </div>

      <Heading w={110}>Field and GPIB</Heading>
      <div className={clsx("h-[82px] w-[335px] bg-[#a3a3a3] pl-[8px]", INSET)}>
        <div className="flex h-[37px]">
          <Field label="Holding Field (G)" lw={78} value="24.9721" vw={40} className="w-[84px]" box="h-[22px] w-[73px]" labelClass={TIGHT_14} />
          <Field label="Theta (degree)" lw={72} value="90" vw={12} className="w-[84px]" box="h-[22px] w-[72px]" labelClass={TIGHT_14} />
          <Field label="Phi (degree)" lw={59} value="180.035" vw={40} className="w-[72px]" box="h-[22px] w-[60px]" labelClass={TIGHT_14} />
          <Field label="RF Coil" lw={33} value="19" vw={12} box="h-[23px] w-[60px]" labelClass={TIGHT_12} />
        </div>
        <div className="flex pl-[134px]">
          <Field label="Pump Lock" lw={51} value="8" className="w-[59px]" box="h-[23px] w-[48px]" labelClass={TIGHT_12} />
          <Field label="Up Lock" lw={37} value="3" className="w-[58px]" box="h-[23px] w-[49px]" labelClass={TIGHT_12} />
          <Field label="Down Lock" lw={52} value="4" box="h-[23px] w-[48px]" labelClass={TIGHT_12} />
        </div>
      </div>

      <Heading w={116} className="-mt-[9px] h-[20px]">Sweep Settings</Heading>
      <div className={clsx("flex h-[106px] w-[335px] bg-[#a3a3a3] pl-[21px]", INSET)}>
        <div className="w-[121px] pt-[10px]">
          <Field label="Low Frequency (kHz)" lw={101} value="77" vw={12} white className="h-[44px]" box="h-[21px] w-[95px]" labelClass="h-[17px] text-[11px] leading-[15px]" />
          <Field label="High Frequency (kHz)" lw={103} value="85" vw={12} white box="h-[21px] w-[95px]" labelClass="h-[15px] text-[11px] leading-[15px]" />
        </div>
        <div className="w-[83px]">
          <Field label="RF Power (Vrms)" lw={80} value="1.5" vw={16} white className="h-[34px]" box="h-[23px] w-[58px]" labelClass="h-[14px] text-[11px] leading-[11px]" />
          <Field label="Sweep Time (s)" lw={73} value="2" white className="h-[32px]" box="h-[22px] w-[58px]" labelClass="z-10 h-[13px] text-[11px] leading-[12px]" />
          <Field label="Sit Time (s)" lw={53} value="0" white box="h-[22px] w-[58px]" labelClass="z-10 h-[13px] text-[11px] leading-[12px]" />
        </div>
        <div className="pt-[10px]">
          <div className="h-[48px]"><Setting label="Odd Sweep Style" lw={82} value="Low to High" vw={57} wide /></div>
          <Setting label="Even Sweep Style" lw={86} value="High to Low" vw={57} wide />
        </div>
      </div>

      <Heading w={222}>Pumping Cell Lock-in Settings</Heading>
      <LockIn id="sw-pump" sensitivity={["1 Vrms", 31]} phase={["107.68", 34]} x={["-11.15", 32]} y={["40.67", 28]} />
      <Heading w={197}>Upstream Lock-in Settings</Heading>
      <LockIn id="sw-up" sensitivity={["100 mVrms", 52]} phase={["90", 12]} x={["-1.76", 26]} y={["-15.07", 32]} />
      <Heading w={219} className="h-[17px]">Downstream Lock-in Settings</Heading>
      <LockIn id="sw-down" sensitivity={["100 mVrms", 52]} phase={["90", 12]} x={["-10.07", 32]} y={["13.89", 28]} />

      <Heading w={179} className="h-[17px]">Background Subtraction</Heading>
      <div className={clsx("flex h-[46px] w-[335px] bg-[#a3a3a3] pt-[3px] pl-[17px]", INSET)}>
        <div className="w-[75px]">
          <Txt w={36} className="ml-[8px] h-[11px] text-[11.5px] leading-[14px]">Enable</Txt>
          <GreenSwitch id="sw-bg" width={54} height={23} />
        </div>
        <Field label="Peak (G)" lw={48} value="81" vw={12} white className="w-[84px]" box="h-[21px] w-[59px]" labelClass="h-[15px] text-[12px] leading-[12px]" />
        <Field label="Window (G)" lw={67} value="4" white className="w-[84px]" box="h-[21px] w-[59px]" labelClass="h-[15px] text-[12px] leading-[12px]" />
        <Field label="Fit Order" lw={48} value="3" white box="h-[21px] w-[48px]" labelClass="h-[15px] text-[12px] leading-[12px]" />
      </div>

      <div className="flex h-[41px] pt-[5px]">
        <Txt w={48} className="mt-[7px] text-[14px] leading-[17px] font-bold">Status</Txt>
        <div className={clsx("ml-[12px] h-[35px] w-[226px] bg-[#d3d3d3] pt-[1px] pl-[2px]", INSET)}>
          <Txt w={107} className="text-[11.5px] leading-[14px] font-bold">Sweeps Completed</Txt>
        </div>
        <div className="h-[33px] w-[51px] border-2 border-t-[#777] border-r-[#ccc] border-b-[#ccc] border-l-[#999] bg-[radial-gradient(ellipse_at_20%_25%,#9fb08f_0%,#42642c_18%,#234a10_45%,#122c04_100%)]" />
      </div>

      <div className="flex h-[55px] pt-[5px] pl-[24px]">
        <Field label="Sweep Number" lw={84} value="1" className="w-[83px]" box="h-[26px] w-[71px]" labelClass={RUN_LABEL} text="pt-[2px] text-[14.5px] font-bold" />
        <svg width="14" height="27" viewBox="0 0 14 27" className="mt-[18px] mr-[10px]">
          <path d="M12 0L0 25" stroke="#666" />
          <path d="M13 1L1 26" stroke="#ddd" />
        </svg>
        <Field label="Number of Sweeps" lw={104} value="1" white className="w-[120px]" box="h-[26px] w-[71px]" labelClass={RUN_LABEL} text="pt-[2px] text-[14.5px] font-bold" />
        <Field label="Wait Time (min)" lw={91} value="120" vw={29} white box="h-[26px] w-[71px]" labelClass={RUN_LABEL} text="pt-[2px] text-[14.5px] font-bold" />
      </div>
      <div className="flex pl-[11px]">
        <BigButton label="Start" w={38} text="text-[14px] text-black" className="border-t-[#7aff38] border-r-[#3cc70e] border-b-[#3cc70e] border-l-[#47d816] bg-[#55fa14]" />
        <BigButton label="Stop" w={34} text="text-[14px] text-[#c9c9c9]" className="ml-[12px] border-t-[#d6b080] border-r-[#b58b58] border-b-[#b58b58] border-l-[#c99d68] bg-[#d2a670]" />
        <BigButton label="Exit" w={38} text="text-[20px] text-white" className="ml-[24px] border-t-[#ff3a30] border-r-[#c80b06] border-b-[#c80b06] border-l-[#e0150f] bg-[#ff1a14]" />
      </div>
    </aside>
  );
}

export default function App() {
  return (
    <div className={clsx("flex h-[904px] w-[1259px] overflow-hidden bg-[#b2b2b2] text-black", UI)}>
      <main className="w-[911px] shrink-0">
        <Header />
        <div className="grid h-[746px] w-[898px] auto-rows-[246px] grid-cols-[444px_444px] content-start pl-[10px]">
          {CHARTS.map((c) => (
            <Chart key={c.title} {...c} />
          ))}
        </div>
        <div className="pt-[4px]">
          <Readouts />
        </div>
      </main>
      <Controls />
    </div>
  );
}
